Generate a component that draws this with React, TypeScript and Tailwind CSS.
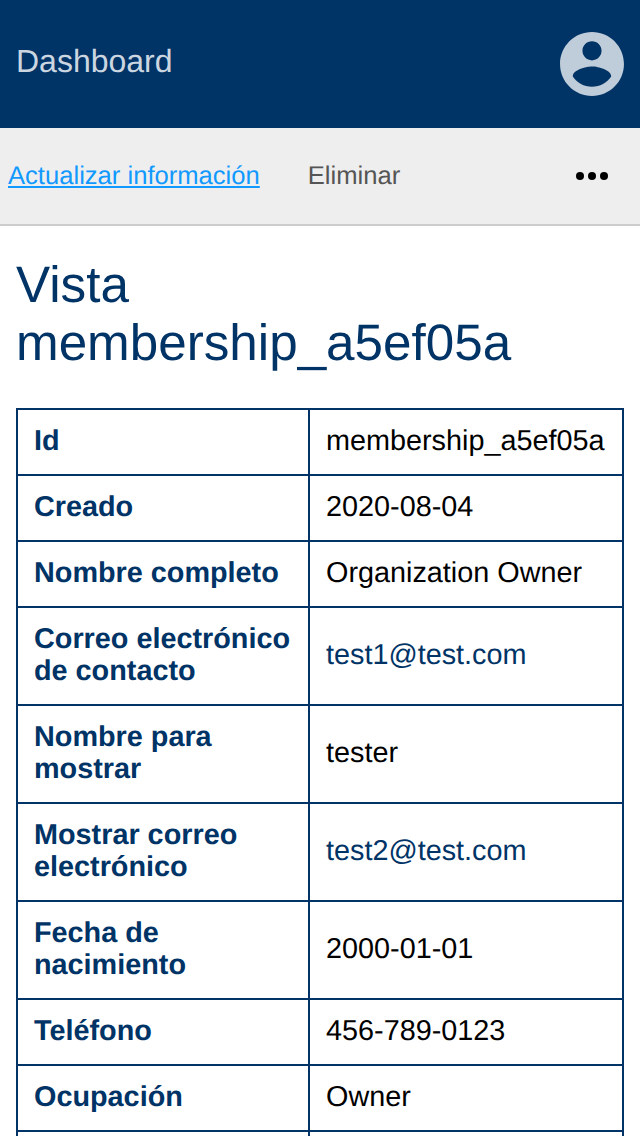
const rows: { label: string; value: string; link?: boolean; tall?: boolean }[] = [
  { label: "Id", value: "membership_a5ef05a" },
  { label: "Creado", value: "2020-08-04" },
  { label: "Nombre completo", value: "Organization Owner" },
  { label: "Correo electrónico de contacto", value: "test1@test.com", link: true, tall: true },
  { label: "Nombre para mostrar", value: "tester", tall: true },
  { label: "Mostrar correo electrónico", value: "test2@test.com", link: true, tall: true },
  { label: "Fecha de nacimiento", value: "2000-01-01", tall: true },
  { label: "Teléfono", value: "456-789-0123" },
  { label: "Ocupación", value: "Owner" },
];

function Header() {
  return (
    <header className="flex h-32 items-center justify-between bg-[#003366] px-4">
      <a className="pb-[5px] text-[32px] leading-[37px] text-[#ccd6e0]">Dashboard</a>
      <svg viewBox="0 0 496 512" className="h-[66px] w-16" fill="#bfccd9" aria-hidden="true">
        <path d="M248 8C111 8 0 119 0 256s111 248 248 248 248-111 248-248S385 8 248 8zm0 72c41 0 74 33 74 74s-33 74-74 74-74-33-74-74 33-74 74-74zm0 352c-62 0-116-32-149-80 1-49 99-76 149-76s148 27 149 76c-33 48-87 80-149 80z" />
      </svg>
    </header>
  );
}

function ActionBar() {
  return (
    <nav className="flex h-[98px] items-center border-b-2 border-[#cccccc] bg-[#eeeeee] px-2 text-[25.6px] leading-8">
      <a className="text-[#1199ff] underline decoration-2 underline-offset-2">Actualizar información</a>
      <a className="ml-12 text-[#555555]">Eliminar</a>
      <svg viewBox="0 0 32 8" className="mr-6 ml-auto h-2 w-8" aria-hidden="true">
        <circle cx="4" cy="4" r="4" />
        <circle cx="16" cy="4" r="4" />
        <circle cx="28" cy="4" r="4" />
      </svg>
    </nav>
  );
}

export default function App() {
  return (
    <div className="h-[1136px] overflow-hidden bg-white font-['Liberation_Sans',Arial,sans-serif] text-black [text-rendering:geometricPrecision]">
      <Header />
      <ActionBar />
      <main className="px-4 pt-[30px]">
        <h1 className="w-[608px] text-[51.2px] leading-[58px] text-[#003366]">
          Vista<br />membership_a5ef05a
        </h1>
        <table className="mt-9 w-full table-fixed border-collapse text-[28.8px] leading-8">
          <colgroup>
            <col className="w-[292px]" />
            <col />
          </colgroup>
          <tbody>
            {rows.map((row) => (
              <tr key={row.label} className={row.tall ? "h-[98px]" : "h-[66px]"}>
                <th className="border-2 border-[#003366] px-4 pt-0 pb-0.5 text-left text-[#003366]">{row.label}</th>
                <td className={row.link ? "border-2 border-[#003366] px-4 pt-0 pb-0.5 text-[#003366]" : "border-2 border-[#003366] px-4 pt-0 pb-0.5"}>{row.value}</td>
              </tr>
            ))}
            <tr className="h-[66px]">
              <th className="border-2 border-[#003366]" />
              <td className="border-2 border-[#003366]" />
            </tr>
          </tbody>
        </table>
      </main>
    </div>
  );
}
